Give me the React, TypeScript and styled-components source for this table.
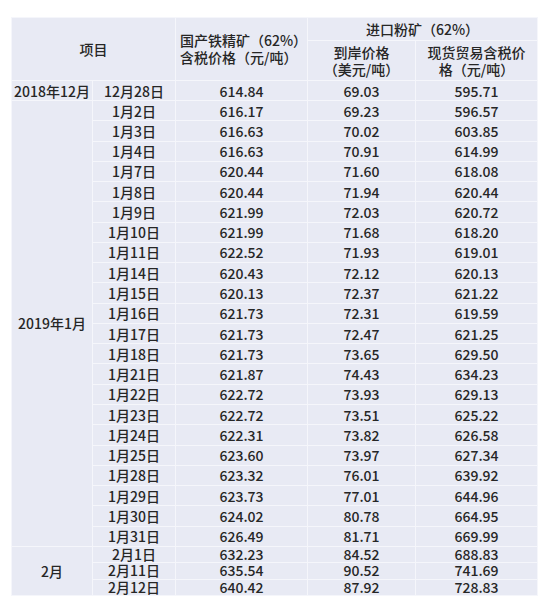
import React from "react";
import styled, { createGlobalStyle } from "styled-components";

const Global = createGlobalStyle`
  html, body { margin: 0; padding: 0; background: #ffffff; }
  body { font-family: "Noto Sans CJK SC", "Noto Sans", sans-serif; }
`;

const Page = styled.div`
  width: 550px;
  height: 604px;
  padding: 17px 0 0 11px;
  box-sizing: border-box;
  background: #fff;
`;

const Table = styled.table`
  border-collapse: collapse;
  table-layout: fixed;
  width: 526px;
  background: #e8eaf4;
  color: #262626;
  font-size: 14px;
  font-weight: 500;
  font-family: "Noto Sans CJK SC", "Noto Sans", sans-serif;
`;

const Cell = styled.td<{ $h?: number; $align?: string; $pl?: number; $lh?: number }>`
  border: 1px solid #f5f6fb;
  padding: 0 ${(p) => (p.$pl != null ? 0 : 2)}px 0 ${(p) => p.$pl ?? 2}px;
  text-align: ${(p) => p.$align ?? "center"};
  vertical-align: middle;
  line-height: ${(p) => p.$lh ?? 16}px;
  height: ${(p) => (p.$h != null ? `${p.$h}px` : "auto")};
  white-space: nowrap;
  box-sizing: border-box;
`;

const HeadCell = styled(Cell)`
  line-height: 17px;
`;

type Row = [string, string, string, string];

const jan: Row[] = [
  ["1月2日", "616.17", "69.23", "596.57"],
  ["1月3日", "616.63", "70.02", "603.85"],
  ["1月4日", "616.63", "70.91", "614.99"],
  ["1月7日", "620.44", "71.60", "618.08"],
  ["1月8日", "620.44", "71.94", "620.44"],
  ["1月9日", "621.99", "72.03", "620.72"],
  ["1月10日", "621.99", "71.68", "618.20"],
  ["1月11日", "622.52", "71.93", "619.01"],
  ["1月14日", "620.43", "72.12", "620.13"],
  ["1月15日", "620.13", "72.37", "621.22"],
  ["1月16日", "621.73", "72.31", "619.59"],
  ["1月17日", "621.73", "72.47", "621.25"],
  ["1月18日", "621.73", "73.65", "629.50"],
  ["1月21日", "621.87", "74.43", "634.23"],
  ["1月22日", "622.72", "73.93", "629.13"],
  ["1月23日", "622.72", "73.51", "625.22"],
  ["1月24日", "622.31", "73.82", "626.58"],
  ["1月25日", "623.60", "73.97", "627.34"],
  ["1月28日", "623.32", "76.01", "639.92"],
  ["1月29日", "623.73", "77.01", "644.96"],
  ["1月30日", "624.02", "80.78", "664.95"],
  ["1月31日", "626.49", "81.71", "669.99"],
];

const feb: Row[] = [
  ["2月1日", "632.23", "84.52", "688.83"],
  ["2月11日", "635.54", "90.52", "741.69"],
  ["2月12日", "640.42", "87.92", "728.83"],
];

const JAN_H = 446 / 22;
const FEB_H = 49 / 3;

export default function App() {
  return (
    <Page>
      <Global />
      <Table>
        <colgroup>
          <col style={{ width: 81 }} />
          <col style={{ width: 83 }} />
          <col style={{ width: 132 }} />
          <col style={{ width: 108 }} />
          <col style={{ width: 122 }} />
        </colgroup>
        <thead>
          <tr>
            <HeadCell colSpan={2} rowSpan={2}>项目</HeadCell>
            <HeadCell rowSpan={2} $align="left" $pl={4}>
              国产铁精矿（62%）
              <br />
              含税价格（元/吨）
            </HeadCell>
            <HeadCell colSpan={2} $h={23}>进口粉矿（62%）</HeadCell>
          </tr>
          <tr>
            <HeadCell $h={40}>
              到岸价格
              <br />
              （美元/吨）
            </HeadCell>
            <HeadCell $h={40}>
              现货贸易含税价
              <br />
              格（元/吨）
            </HeadCell>
          </tr>
        </thead>
        <tbody>
          <tr>
            <Cell $h={20}>2018年12月</Cell>
            <Cell>12月28日</Cell>
            <Cell>614.84</Cell>
            <Cell>69.03</Cell>
            <Cell>595.71</Cell>
          </tr>
          {jan.map((r, i) => (
            <tr key={r[0]}>
              {i === 0 && <Cell rowSpan={jan.length}>2019年1月</Cell>}
              <Cell $h={JAN_H}>{r[0]}</Cell>
              <Cell>{r[1]}</Cell>
              <Cell>{r[2]}</Cell>
              <Cell>{r[3]}</Cell>
            </tr>
          ))}
          {feb.map((r, i) => (
            <tr key={r[0]}>
              {i === 0 && <Cell rowSpan={feb.length}>2月</Cell>}
              <Cell $h={FEB_H} $lh={15}>{r[0]}</Cell>
              <Cell $lh={15}>{r[1]}</Cell>
              <Cell $lh={15}>{r[2]}</Cell>
              <Cell $lh={15}>{r[3]}</Cell>
            </tr>
          ))}
        </tbody>
      </Table>
    </Page>
  );
}
